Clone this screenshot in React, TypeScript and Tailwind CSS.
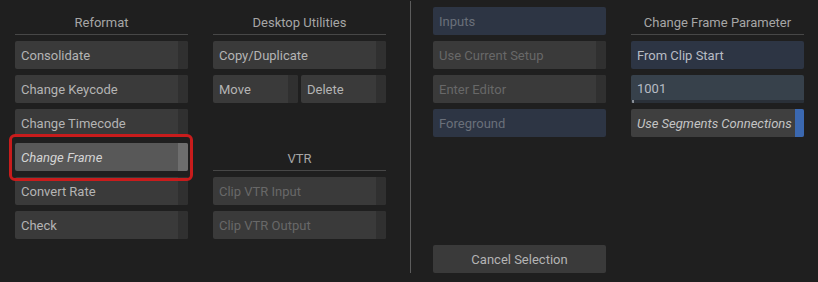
import React from 'react';

type BtnProps = {
  label: string;
  strip?: boolean;
  disabled?: boolean;
  selected?: boolean;
  className?: string;
};

const Btn: React.FC<BtnProps> = ({ label, strip = true, disabled, selected, className = '' }) => (
  <div
    className={`flex h-[28px] rounded-[2px] overflow-hidden ${selected ? 'bg-[#585858]' : 'bg-[#3a3a3a]'} ${className}`}
  >
    <div
      className={`flex-1 flex items-center pl-[6px] pt-px whitespace-nowrap ${
        disabled ? 'text-[#686868]' : selected ? 'text-[#d4d4d4] italic' : 'text-[#b4b4b4]'
      }`}
    >
      {label}
    </div>
    {strip && <div className={`w-[10px] ${selected ? 'bg-[#6e6e6e]' : 'bg-[#303030]'}`} />}
  </div>
);

const Field: React.FC<{ label: string; dim?: boolean }> = ({ label, dim }) => (
  <div
    className={`flex items-center h-[28px] rounded-[2px] bg-[#2d3544] pl-[6px] pt-px ${dim ? 'text-[#6a707a]' : 'text-[#b8bcc4]'}`}
  >
    {label}
  </div>
);

const Header: React.FC<{ title: string; className?: string }> = ({ title, className = '' }) => (
  <div className={`h-[35px] pt-[11px] flex items-center justify-center border-b border-[#474747] text-[#a6a6a6] ${className}`}>
    {title}
  </div>
);

export default function App() {
  return (
    <div
      className="w-[818px] h-[282px] bg-[#1f1f1f] flex text-[13px] overflow-hidden"
      style={{ fontFamily: 'Roboto, "Noto Sans", sans-serif' }}
    >
      {/* Reformat */}
      <div className="relative w-[173px] ml-[15px] flex flex-col gap-[6px]">
        <Header title="Reformat" />
        <Btn label="Consolidate" />
        <Btn label="Change Keycode" />
        <Btn label="Change Timecode" />
        <Btn label="Change Frame" selected />
        <Btn label="Convert Rate" />
        <Btn label="Check" />
        <div className="absolute left-[-6px] top-[134px] w-[184px] h-[47px] border-[3px] border-[#c81c1c] rounded-[6px]" />
      </div>

      {/* Desktop Utilities / VTR */}
      <div className="w-[173px] ml-[25px] flex flex-col gap-[6px]">
        <Header title="Desktop Utilities" />
        <Btn label="Copy/Duplicate" />
        <div className="flex gap-[3px]">
          <Btn label="Move" className="flex-1" />
          <Btn label="Delete" className="flex-1" />
        </div>
        <Header title="VTR" className="mt-[27px]" />
        <Btn label="Clip VTR Input" disabled />
        <Btn label="Clip VTR Output" disabled />
      </div>

      <div className="ml-[24px] w-px mt-[1px] h-[272px] bg-[#5c5c5c]" />

      {/* Inputs */}
      <div className="w-[173px] ml-[22px] pt-[7px] pb-[9px] flex flex-col gap-[6px]">
        <Field label="Inputs" dim />
        <Btn label="Use Current Setup" disabled />
        <Btn label="Enter Editor" disabled />
        <Field label="Foreground" dim />
        <div className="mt-auto h-[28px] pt-px rounded-[2px] bg-[#3a3a3a] flex items-center justify-center text-[#b4b4b4]">
          Cancel Selection
        </div>
      </div>

      {/* Change Frame Parameter */}
      <div className="w-[173px] ml-[25px] flex flex-col gap-[6px]">
        <Header title="Change Frame Parameter" />
        <Field label="From Clip Start" />
        <div className="h-[28px] rounded-[2px] bg-[#37414b] flex flex-col overflow-hidden">
          <div className="flex-1 flex items-center pl-[6px] pt-[2px] text-[#b8bcc4]">1001</div>
          <div className="h-[3px] bg-[#2a3038] flex">
            <div className="w-[2px] ml-px bg-[#8a8f96]" />
          </div>
        </div>
        <div className="flex h-[28px] rounded-[2px] overflow-hidden bg-[#3f3f3f]">
          <div className="flex-1 flex items-center pl-[6px] pt-px italic text-[#c4c4c4] whitespace-nowrap">
            Use Segments Connections
          </div>
          <div className="w-[9px] bg-[#3b68b0]" />
        </div>
      </div>
    </div>
  );
}
